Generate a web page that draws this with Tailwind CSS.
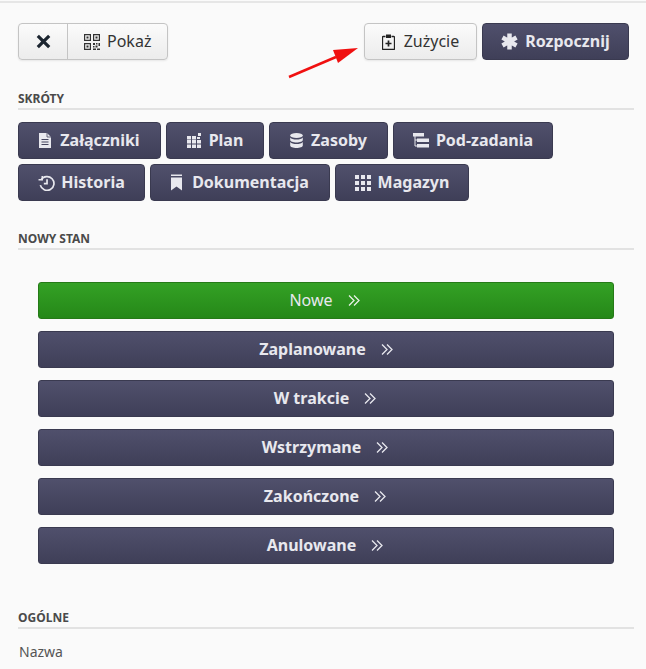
<!DOCTYPE html>
<html><head><meta charset="utf-8"><script src="https://cdn.jsdelivr.net/npm/@tailwindcss/browser@4"></script></head>
<body class="bg-[#fafafa] font-['Noto_Sans','Open_Sans',sans-serif] overflow-hidden">
<div class="relative w-[646px] h-[669px] overflow-hidden">
<div class="h-[3px] border-b-2 border-[#e6e6e6]"></div>
<div class="pl-[18px] pr-[17px] pt-[20px] flex justify-between">
  <div class="flex h-[37px] rounded-[4px] border border-[#c4c4c4] bg-gradient-to-b from-[#fbfbfb] to-[#ececec] shadow-[0_1px_2px_rgba(0,0,0,0.08)] text-[#333]">
    <div class="w-[49px] flex items-center justify-center border-r border-[#c4c4c4]">
      <svg width="15" height="15" viewBox="0 0 15 15"><path d="M1.800 1.800 L13.200 13.200 M13.200 1.800 L1.800 13.200" stroke="#1c2530" stroke-width="3.200" fill="none"/></svg>
    </div>
    <div class="flex items-center gap-[7px] pl-[16px] pr-[16px] text-[16px]">
      <svg width="16" height="16" viewBox="0 0 16 16" fill="#333"><path fill-rule="evenodd" d="M0 0h7v7H0zM1.200 1.200v4.600h4.600V1.200zM9 0h7v7H9zM10.200 1.200v4.600h4.600V1.200zM0 9h7v7H0zM1.200 10.200v4.600h4.600v-4.600z"/><path d="M2.500 2.500h2v2h-2zM11.500 2.500h2v2h-2zM2.500 11.500h2v2h-2zM9 9h2v2H9zM12 9h1.500v1.500H12zM14.500 9H16v3h-1.500zM9 12h1.500v1.500H9zM11.500 11.500h2v2h-2zM9 14.500h3V16H9zM13 14.500h3V16h-3z"/></svg>
      <span class="pb-[2px]">Pokaż</span>
    </div>
  </div>
  <div class="flex gap-[5px]">
    <div class="flex items-center justify-center gap-[9px] w-[113px] h-[37px] rounded-[4px] border border-[#c4c4c4] bg-gradient-to-b from-[#fbfbfb] to-[#ececec] shadow-[0_1px_2px_rgba(0,0,0,0.08)] text-[16px] text-[#333]">
      <svg width="13" height="16" viewBox="0 0 13 16"><path d="M3.500 2.500H1.200a.7.7 0 0 0-.7.700v11.600a.7.7 0 0 0 .7.700h10.600a.7.7 0 0 0 .7-.700V3.200a.7.7 0 0 0-.7-.700H9.500" fill="none" stroke="#222" stroke-width="1.300"/><rect x="4" y="0.500" width="5" height="3.500" fill="#222"/><path d="M6.500 6.500v6M3.500 9.500h6" stroke="#222" stroke-width="1.700"/></svg>
      <span class="pb-[2px]">Zużycie</span>
    </div>
    <div class="flex items-center justify-center gap-[7px] w-[147px] h-[37px] rounded-[4px] border border-[#3a3a50] bg-gradient-to-b from-[#50506c] to-[#3f3f58] text-[16px] font-bold text-[#e8e8ee]">
      <svg width="17" height="17" viewBox="0 0 17 17"><path d="M8.500 0.500v16M1.500 4.500l14 8M15.500 4.500l-14 8" stroke="#e8e8ee" stroke-width="4.500" fill="none"/></svg>
      <span class="pb-[2px]">Rozpocznij</span>
    </div>
  </div>
</div>

<div class="mx-[18px] mt-[30px] w-[616px] h-[20px] border-b-2 border-[#e2e2e2] text-[12px] leading-[18px] font-bold text-[#4a4a4a]">SKRÓTY</div>

<div class="ml-[18px] mt-[12px] flex gap-[5px] text-[16px] font-bold text-[#e8e8ee]">
  <div class="w-[143px] h-[37px] flex items-center justify-center gap-[8px] rounded-[4px] border border-[#3a3a50] bg-gradient-to-b from-[#50506c] to-[#3f3f58]">
    <svg width="13" height="15" viewBox="0 0 13 15" fill="#e8e8ee"><path d="M0 0h8l4 4v11H0z"/><path d="M2.500 6.500h7M2.500 9h7M2.500 11.500h7" stroke="#45455e" stroke-width="1"/><path d="M8 0v4h4" fill="none" stroke="#45455e" stroke-width=".8"/></svg>
    <span class="pb-[2px]">Załączniki</span>
  </div>
  <div class="w-[98px] h-[37px] flex items-center justify-center gap-[7px] rounded-[4px] border border-[#3a3a50] bg-gradient-to-b from-[#50506c] to-[#3f3f58]">
    <svg width="15" height="15" viewBox="0 0 15 15" fill="#e8e8ee"><path d="M0 3h4v3.500H0zM5 3h4v3.500H5zM0 7h4v3.500H0zM5 7h4v3.500H5zM10 7h4v3.500h-4zM0 11.500h4V15H0zM5 11.500h4V15H5zM10 11.500h4V15h-4zM11 0h3v3h-3zM10 4h3v2h-3z"/></svg>
    <span class="pb-[2px]">Plan</span>
  </div>
  <div class="w-[119px] h-[37px] flex items-center justify-center gap-[8px] rounded-[4px] border border-[#3a3a50] bg-gradient-to-b from-[#50506c] to-[#3f3f58]">
    <svg width="13" height="15" viewBox="0 0 13 15" fill="#e8e8ee"><ellipse cx="6.500" cy="2.500" rx="6.300" ry="2.500"/><path d="M.2 4.500c1 1.500 3.500 2 6.300 2s5.300-.5 6.300-2v2.500c0 1.400-2.800 2.500-6.300 2.500S.2 8.400.2 7z"/><path d="M.2 9c1 1.500 3.500 2 6.300 2s5.300-.5 6.300-2v3.500c0 1.400-2.800 2.500-6.300 2.500S.2 13.900.2 12.500z"/></svg>
    <span class="pb-[2px]">Zasoby</span>
  </div>
  <div class="w-[160px] h-[37px] flex items-center justify-center gap-[7px] rounded-[4px] border border-[#3a3a50] bg-gradient-to-b from-[#50506c] to-[#3f3f58]">
    <svg width="16" height="16" viewBox="0 0 16 16" fill="#e8e8ee"><path d="M0 0h11v3.500H0zM4 5.500h12v3.500H4zM4 11h12v3.500H4z"/><path d="M2 3v10h3M2 7h3" fill="none" stroke="#e8e8ee" stroke-width="1"/></svg>
    <span class="pb-[2px]">Pod-zadania</span>
  </div>
</div>
<div class="ml-[18px] mt-[5px] flex gap-[5px] text-[16px] font-bold text-[#e8e8ee]">
  <div class="w-[127px] h-[37px] flex items-center justify-center gap-[6px] rounded-[4px] border border-[#3a3a50] bg-gradient-to-b from-[#50506c] to-[#3f3f58]">
    <svg width="17" height="16" viewBox="0 0 16 15" fill="none" stroke="#e8e8ee" stroke-width="1.600"><path d="M3 4.500a6.500 6.500 0 1 1-.8 5"/><path d="M0.500 4.500h3.500V1" stroke-width="1.400"/><path d="M8.500 4v4H5.500"/></svg>
    <span class="pb-[2px]">Historia</span>
  </div>
  <div class="w-[180px] h-[37px] flex items-center justify-center gap-[9px] rounded-[4px] border border-[#3a3a50] bg-gradient-to-b from-[#50506c] to-[#3f3f58]">
    <svg width="12" height="17" viewBox="0 0 12 16" fill="#e8e8ee"><path d="M0 0h11v1.500H0zM0 3h11v13L5.500 12 0 16z"/></svg>
    <span class="pb-[2px]">Dokumentacja</span>
  </div>
  <div class="w-[134px] h-[37px] flex items-center justify-center gap-[7px] rounded-[4px] border border-[#3a3a50] bg-gradient-to-b from-[#50506c] to-[#3f3f58]">
    <svg width="16" height="16" viewBox="0 0 16 16" fill="#e8e8ee"><path d="M0 0h4v4H0zM6 0h4v4H6zM12 0h4v4h-4zM0 6h4v4H0zM6 6h4v4H6zM12 6h4v4h-4zM0 12h4v4H0zM6 12h4v4H6zM12 12h4v4h-4z"/></svg>
    <span class="pb-[2px]">Magazyn</span>
  </div>
</div>

<div class="mx-[18px] mt-[29px] w-[616px] h-[20px] border-b-2 border-[#e2e2e2] text-[12px] leading-[18px] font-bold text-[#4a4a4a]">NOWY STAN</div>

<div class="mx-[38px] mt-[32px] w-[576px] flex flex-col gap-[12px] text-[16px] text-[#e8e8ee]">
  <div class="h-[37px] pr-[3px] flex items-center justify-center gap-[15px] rounded-[3px] border border-[#257a17] bg-gradient-to-b from-[#34a125] to-[#258818] font-normal">
    <span class="pb-[2px]">Nowe</span><svg width="12" height="11" viewBox="0 0 12 11" fill="none" stroke="#e8f2e6" stroke-width="1.300"><path d="M1 .5l5 5-5 5M6 .5l5 5-5 5"/></svg>
  </div>
  <div class="h-[37px] flex items-center justify-center gap-[15px] rounded-[3px] border border-[#3a3a50] bg-gradient-to-b from-[#50506c] to-[#3f3f58] font-bold">
    <span class="pb-[2px]">Zaplanowane</span><svg width="12" height="11" viewBox="0 0 12 11" fill="none" stroke="#e8e8ee" stroke-width="1.300"><path d="M1 .5l5 5-5 5M6 .5l5 5-5 5"/></svg>
  </div>
  <div class="h-[37px] pr-[2px] flex items-center justify-center gap-[15px] rounded-[3px] border border-[#3a3a50] bg-gradient-to-b from-[#50506c] to-[#3f3f58] font-bold">
    <span class="pb-[2px]">W trakcie</span><svg width="12" height="11" viewBox="0 0 12 11" fill="none" stroke="#e8e8ee" stroke-width="1.300"><path d="M1 .5l5 5-5 5M6 .5l5 5-5 5"/></svg>
  </div>
  <div class="h-[37px] pr-[2px] flex items-center justify-center gap-[15px] rounded-[3px] border border-[#3a3a50] bg-gradient-to-b from-[#50506c] to-[#3f3f58] font-bold">
    <span class="pb-[2px]">Wstrzymane</span><svg width="12" height="11" viewBox="0 0 12 11" fill="none" stroke="#e8e8ee" stroke-width="1.300"><path d="M1 .5l5 5-5 5M6 .5l5 5-5 5"/></svg>
  </div>
  <div class="h-[37px] pr-[2px] flex items-center justify-center gap-[15px] rounded-[3px] border border-[#3a3a50] bg-gradient-to-b from-[#50506c] to-[#3f3f58] font-bold">
    <span class="pb-[2px]">Zakończone</span><svg width="12" height="11" viewBox="0 0 12 11" fill="none" stroke="#e8e8ee" stroke-width="1.300"><path d="M1 .5l5 5-5 5M6 .5l5 5-5 5"/></svg>
  </div>
  <div class="h-[37px] pr-[2px] flex items-center justify-center gap-[15px] rounded-[3px] border border-[#3a3a50] bg-gradient-to-b from-[#50506c] to-[#3f3f58] font-bold">
    <span class="pb-[2px]">Anulowane</span><svg width="12" height="11" viewBox="0 0 12 11" fill="none" stroke="#e8e8ee" stroke-width="1.300"><path d="M1 .5l5 5-5 5M6 .5l5 5-5 5"/></svg>
  </div>
</div>

<div class="mx-[18px] mt-[45px] w-[616px] h-[20px] border-b-2 border-[#e2e2e2] text-[12px] leading-[18px] font-bold text-[#4a4a4a]">OGÓLNE</div>
<div class="ml-[19px] mt-[13px] text-[14px] leading-[20px] text-[#555]">Nazwa</div>

<svg class="absolute left-[288px] top-[44px]" width="74" height="35" viewBox="0 0 74 35"><path d="M1 33 L48 13" stroke="#f01010" stroke-width="2.500"/><path d="M70 4 L45 6 L50 19 Z" fill="#f01010"/></svg>
</div>
</body></html>
